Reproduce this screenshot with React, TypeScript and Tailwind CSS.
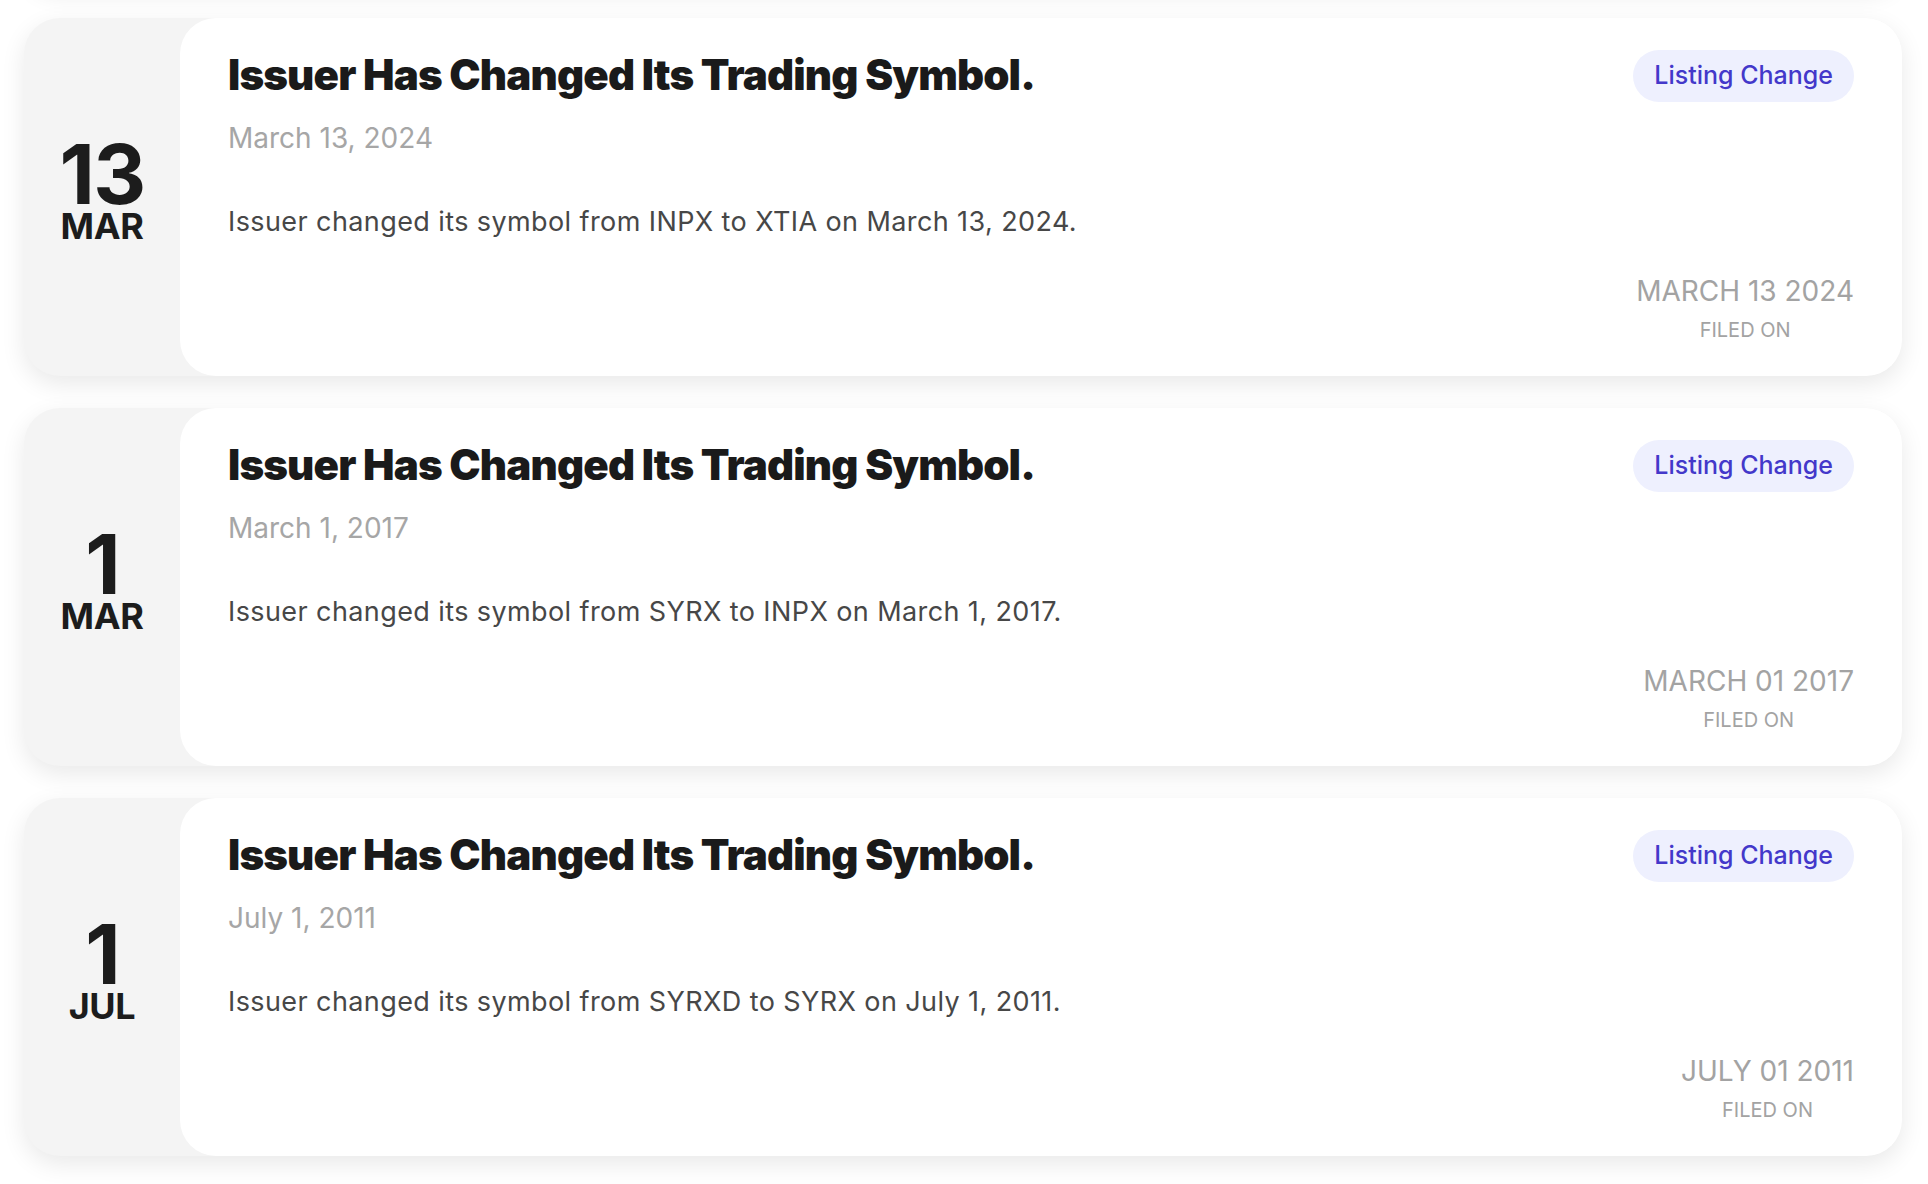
import React from "react";

type Filing = {
  day: string;
  month: string;
  title: string;
  date: string;
  description: string;
  filedOn: string;
  tag: string;
};

const filings: Filing[] = [
  {
    day: "13",
    month: "MAR",
    title: "Issuer Has Changed Its Trading Symbol.",
    date: "March 13, 2024",
    description: "Issuer changed its symbol from INPX to XTIA on March 13, 2024.",
    filedOn: "MARCH 13 2024",
    tag: "Listing Change",
  },
  {
    day: "1",
    month: "MAR",
    title: "Issuer Has Changed Its Trading Symbol.",
    date: "March 1, 2017",
    description: "Issuer changed its symbol from SYRX to INPX on March 1, 2017.",
    filedOn: "MARCH 01 2017",
    tag: "Listing Change",
  },
  {
    day: "1",
    month: "JUL",
    title: "Issuer Has Changed Its Trading Symbol.",
    date: "July 1, 2011",
    description: "Issuer changed its symbol from SYRXD to SYRX on July 1, 2011.",
    filedOn: "JULY 01 2011",
    tag: "Listing Change",
  },
];

function FilingCard({ item }: { item: Filing }) {
  return (
    <div className="flex h-[358px] rounded-[36px] bg-[#f4f4f4] shadow-[0_8px_24px_rgba(0,0,0,0.09)]">
      <div className="flex w-[156px] shrink-0 flex-col items-center justify-center pb-2 text-[#1c1c1c]">
        <span className="text-[82px] leading-[66px] font-bold tracking-[-0.02em]">{item.day}</span>
        <span className="text-[36px] leading-[36px] font-bold tracking-[-0.01em]">{item.month}</span>
      </div>
      <div className="flex flex-1 flex-col rounded-[36px] bg-white px-12 pt-8 pb-8">
        <div className="flex items-start justify-between">
          <h2 className="text-[42px] leading-[50px] font-black tracking-[-0.02em] text-[#1a1a1a]">
            {item.title}
          </h2>
          <span className="flex h-[52px] items-center rounded-full bg-[#eef0fe] px-[21px] text-[25px] font-medium text-[#4338ca]">
            {item.tag}
          </span>
        </div>
        <p className="mt-[18px] text-[28px] leading-[36px] text-[#a6a6a6]">{item.date}</p>
        <p className="mt-12 text-[27px] leading-[36px] tracking-[0.015em] text-[#474747]">{item.description}</p>
        <div className="mt-auto flex justify-end">
          <div className="flex flex-col items-center text-[#a3a3a3]">
            <span className="text-[28px] leading-[36px]">{item.filedOn}</span>
            <span className="mt-[7px] text-[20px] leading-[28px]">FILED ON</span>
          </div>
        </div>
      </div>
    </div>
  );
}

export default function App() {
  return (
    <div className="min-h-screen overflow-hidden bg-white pl-6 pr-[26px] font-['Inter',sans-serif]">
      <div className="-mt-[372px] flex flex-col gap-8 pb-10">
        {/* previous item, scrolled out of view: only its shadow shows */}
        <div className="h-[358px] rounded-[36px] bg-[#f4f4f4] shadow-[0_8px_24px_rgba(0,0,0,0.09)]" />
        {filings.map((f, i) => (
          <FilingCard key={i} item={f} />
        ))}
      </div>
    </div>
  );
}
